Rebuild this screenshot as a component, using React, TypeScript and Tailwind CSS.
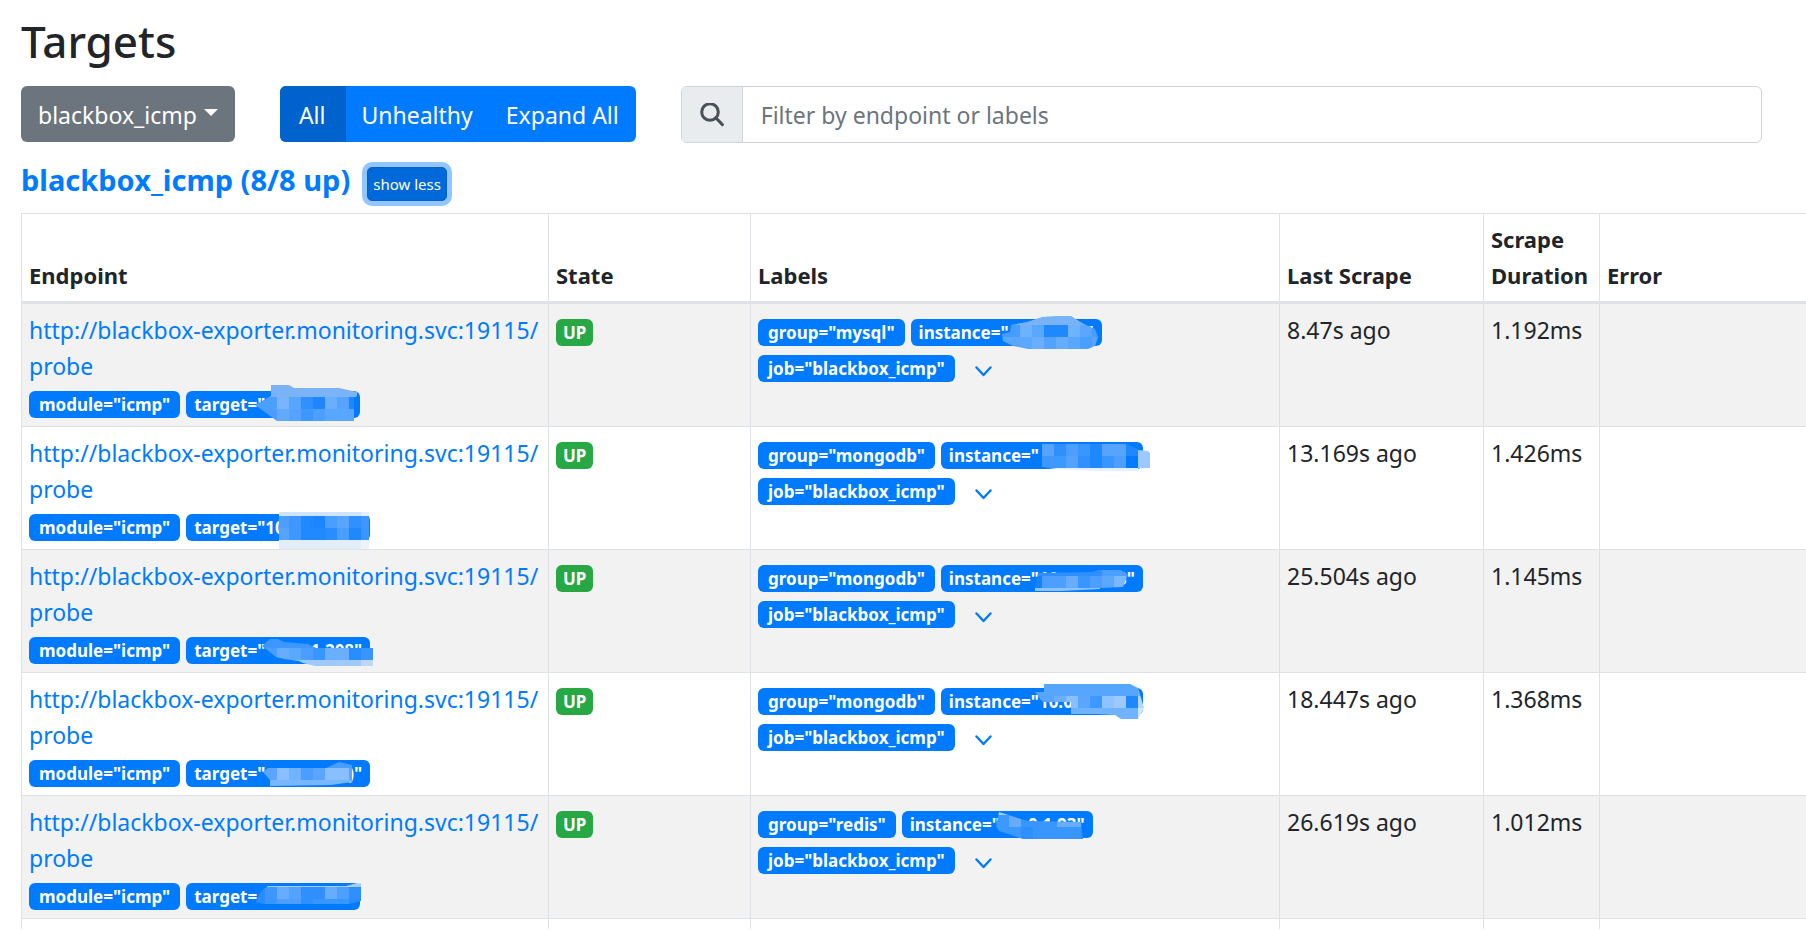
import { useId, useState } from "react";

type Band = { y: number; h: number; x: number; cells: string[] };
type Mask = { outline: string; bands: Band[] };
type Hidden = { head: string; tail?: string; width: string; mask: Mask };
type Target = {
  group: string;
  target: Hidden;
  instance: Hidden;
  last: string;
  duration: string;
};

const CELL = 12;
const fill = (color: string, n: number): string[] => Array(n).fill(color);

const targets: Target[] = [
  {
    group: "mysql",
    last: "8.47s ago",
    duration: "1.192ms",
    target: {
      head: 'target="',
      width: "w-[174px]",
      mask: {
        outline: "85,-6 103,-6 108,-3 153,-3 171,1 171,5 168,7 168,30 91,30 69,14 85,5",
        bands: [
          { y: -6, h: 12, x: 67, cells: fill("#7ab3f7", 9) },
          { y: 6, h: 12, x: 67, cells: ["#4a9fff", "#4a9fff", "#7ab4ff", "#56a5ff", "#3090ff", "#1f86ff", "#6aafff", "#56a4ff", "#1e86ff"] },
          { y: 18, h: 12, x: 67, cells: ["#4c9dff", "#4c9dff", "#62aaff", "#55a3ff", "#3d97ff", "#4c9eff", "#58a6ff", "#58a6ff", "#58a6ff"] },
        ],
      },
    },
    instance: {
      head: 'instance="',
      tail: '"',
      width: "w-[191px]",
      mask: {
        outline: "91,15 99,13 100,6 116,3 131,-2 145,-3 160,-3 171,4 184,10 187,18 184,27 177,30 117,30 102,27 92,22",
        bands: [
          { y: -3, h: 9, x: 85, cells: fill("#78b3f8", 9) },
          { y: 6, h: 12, x: 85, cells: ["#479cff", "#479cff", "#6db1ff", "#58a8ff", "#2088ff", "#2088ff", "#6fb2ff", "#5ba7ff", "#479cff"] },
          { y: 18, h: 12, x: 85, cells: ["#5aa6ff", "#5aa6ff", "#5ca8ff", "#6aafff", "#52a2ff", "#66adff", "#5aa6ff", "#4a9eff", "#5aa6ff"] },
        ],
      },
    },
  },
  {
    group: "mongodb",
    last: "13.169s ago",
    duration: "1.426ms",
    target: {
      head: 'target="10',
      width: "w-[184px]",
      mask: {
        outline: "93,-2 183,-2 183,35 93,35",
        bands: [
          { y: -2, h: 4, x: 91, cells: [...fill("#cfe5fd", 7), "#e4f1ff"] },
          { y: 2, h: 12, x: 91, cells: ["#4c9eff", "#3f98ff", "#2089ff", "#1a85ff", "#4a9eff", "#58a6ff", "#3090ff", "#3d97ff"] },
          { y: 14, h: 12, x: 91, cells: ["#56a4ff", "#3f98ff", "#2089ff", "#2089ff", "#2a8dff", "#4a9eff", "#1f88ff", "#3a96ff"] },
          { y: 26, h: 9, x: 91, cells: [...fill("#e3edf8", 7), "#edf3fa"] },
        ],
      },
    },
    instance: {
      head: 'instance="',
      width: "w-[202px]",
      mask: {
        outline: "101,2 185,2 197,7 197,8 207,9 209,11 209,26 197,26 197,29 157,29 115,27 101,25",
        bands: [
          { y: 2, h: 12, x: 101, cells: ["#56a4ff", "#2f8fff", "#4c9fff", "#3a96ff", "#2088ff", "#56a4ff", "#56a4ff", "#2088ff", "#9cc9ff"] },
          { y: 14, h: 12, x: 101, cells: ["#3d98ff", "#3d98ff", "#52a2ff", "#3090ff", "#1f88ff", "#3a96ff", "#4c9fff", "#047bff", "#9cc9ff"] },
          { y: 26, h: 3, x: 101, cells: fill("#e4f0ff", 9) },
        ],
      },
    },
  },
  {
    group: "mongodb",
    last: "25.504s ago",
    duration: "1.145ms",
    target: {
      head: 'target="',
      tail: '1.208"',
      width: "w-[184px]",
      mask: {
        outline: "76,9 84,2 92,2 98,5 122,7 130,11 187,11 187,29 129,29 117,26 113,24 98,22 90,20",
        bands: [
          { y: 2, h: 9, x: 67, cells: fill("#3d97ff", 10) },
          { y: 11, h: 12, x: 67, cells: ["#4a9eff", "#4a9eff", "#66adff", "#5ba8ff", "#4a9eff", "#3a96ff", "#6aafff", "#6aafff", "#2a8dff", "#3a96ff"] },
          { y: 23, h: 6, x: 67, cells: [...fill("#9fc9f8", 9), "#bcd8f6"] },
        ],
      },
    },
    instance: {
      head: 'instance="10',
      tail: '3"',
      width: "w-[202px]",
      mask: {
        outline: "97,8 152,7 157,5 180,5 187,10 182,22 159,23 159,24 120,26 94,26 94,23",
        bands: [
          { y: 5, h: 6, x: 89, cells: [...fill("#2f8fff", 6), ...fill("#4c9fff", 3)] },
          { y: 11, h: 12, x: 89, cells: ["#1583ff", "#4c9fff", "#4c9fff", "#66adff", "#3a96ff", "#4c9fff", "#5ca8ff", "#7ab8ff", "#4c9fff"] },
          { y: 23, h: 3, x: 89, cells: fill("#8fc3ff", 9) },
        ],
      },
    },
  },
  {
    group: "mongodb",
    last: "18.447s ago",
    duration: "1.368ms",
    target: {
      head: 'target="',
      tail: ')"',
      width: "w-[184px]",
      mask: {
        outline: "77,12 82,8 140,8 153,2 166,5 166,22 145,25 84,26 84,20",
        bands: [
          { y: 2, h: 6, x: 67, cells: fill("#4a9eff", 9) },
          { y: 8, h: 12, x: 67, cells: ["#5aa6ff", "#5aa6ff", "#8abfff", "#6fb3ff", "#4a9eff", "#5aa6ff", "#8abfff", "#8abfff", "#5aa6ff"] },
          { y: 20, h: 6, x: 67, cells: fill("#78b6ff", 9) },
        ],
      },
    },
    instance: {
      head: 'instance="10.0',
      width: "w-[202px]",
      mask: {
        outline: "94,4 103,4 103,-4 189,-4 197,0 203,20 197,31 180,31 174,27 155,26 130,26 130,14 102,14",
        bands: [
          { y: -4, h: 12, x: 89, cells: [...fill("#56a5ff", 9), "#78b6ff"] },
          { y: 8, h: 12, x: 89, cells: ["#56a4ff", "#56a4ff", "#6aafff", "#8abfff", "#5aa6ff", "#3d98ff", "#8fc3ff", "#9ccaff", "#2088ff", "#b5d7ff"] },
          { y: 20, h: 11, x: 89, cells: [...fill("#6fb3ff", 9), "#cfe4ff"] },
        ],
      },
    },
  },
  {
    group: "redis",
    last: "26.619s ago",
    duration: "1.012ms",
    target: {
      head: 'target=',
      width: "w-[174px]",
      mask: {
        outline: "70,19 75,8 82,3 160,3 167,1 175,0 175,18 163,21 77,21",
        bands: [
          { y: 0, h: 4, x: 67, cells: fill("#a5cdfb", 9) },
          { y: 4, h: 12, x: 67, cells: ["#2a8dff", "#3d97ff", "#66adff", "#52a3ff", "#2f8fff", "#2f8fff", "#66adff", "#4c9fff", "#2f8fff"] },
          { y: 16, h: 6, x: 67, cells: ["#2a8dff", "#3a96ff", "#4c9fff", "#4c9fff", "#2f8fff", "#3a96ff", "#3a96ff", "#3a96ff", "#2a8dff"] },
        ],
      },
    },
    instance: {
      head: 'instance="',
      tail: '0.1.93"',
      width: "w-[191px]",
      mask: {
        outline: "94,15 97,1 119,8 126,10 179,11 181,28 121,28 97,20",
        bands: [
          { y: 0, h: 4, x: 83, cells: fill("#a5cdfb", 9) },
          { y: 4, h: 12, x: 83, cells: ["#3d98ff", "#3d98ff", "#66adff", "#3a96ff", "#3a96ff", "#3a96ff", "#66adff", "#66adff", "#3a96ff"] },
          { y: 16, h: 12, x: 83, cells: ["#3d98ff", "#3d98ff", "#3d98ff", "#2f8fff", "#3a96ff", "#3a96ff", "#3a96ff", "#3a96ff", "#2f8fff"] },
        ],
      },
    },
  },
];

function Mosaic({ mask }: { mask: Mask }) {
  const id = useId();
  return (
    <svg className="pointer-events-none absolute top-0 left-0 h-full w-full overflow-visible" shapeRendering="crispEdges" aria-hidden="true">
      <clipPath id={id}>
        <polygon points={mask.outline} />
      </clipPath>
      <g clipPath={`url(#${id})`}>
        {mask.bands.map((b) =>
          b.cells.map((color, i) => (
            <rect key={`${b.y}-${i}`} x={b.x + i * CELL} y={b.y} width={CELL} height={b.h} fill={color} />
          )),
        )}
      </g>
    </svg>
  );
}

function Badge({ text }: { text: string }) {
  return (
    <span className="h-[27px] rounded-md bg-[#007bff] px-2.5 text-[17px] leading-[27px] font-bold whitespace-nowrap text-white">
      {text}
    </span>
  );
}

function HiddenBadge({ value }: { value: Hidden }) {
  return (
    <span
      className={`relative flex h-[27px] justify-between rounded-md bg-[#007bff] px-2 text-[17px] leading-[27px] font-bold whitespace-nowrap text-white ${value.width}`}
    >
      <span>{value.head}</span>
      {value.tail && <span>{value.tail}</span>}
      <Mosaic mask={value.mask} />
    </span>
  );
}

function Row({ item }: { item: Target }) {
  const td = "border border-[#dee2e6] px-[7px] pt-2 pb-1.5 align-top";
  return (
    <tr className="odd:bg-[#f2f2f2]">
      <td className={td}>
        <a href="#probe" className="text-[#007bff]">
          http://blackbox-exporter.monitoring.svc:19115/
          <wbr />
          probe
        </a>
        <div className="flex h-9 items-end gap-1.5 pb-0.5">
          <Badge text={'module="icmp"'} />
          <HiddenBadge value={item.target} />
        </div>
      </td>
      <td className={td}>
        <div className="flex h-9 items-end pb-0.5">
          <span className="h-[27px] rounded-md bg-[#28a745] px-[7px] text-[17px] leading-[27px] font-bold text-white">UP</span>
        </div>
      </td>
      <td className={td}>
        <div className="flex h-9 items-end gap-1.5 pb-0.5">
          <Badge text={`group="${item.group}"`} />
          <HiddenBadge value={item.instance} />
        </div>
        <div className="flex h-9 items-end pb-0.5">
          <Badge text={'job="blackbox_icmp"'} />
          <button type="button" aria-label="Show more labels" className="ml-5 flex h-[22px] items-center">
            <svg width="17" height="11" viewBox="0 0 17 11" fill="none" stroke="#007bff" strokeWidth="2.4" strokeLinecap="round" strokeLinejoin="round">
              <path d="M1.5 1.5 8.5 9l7-7.5" />
            </svg>
          </button>
        </div>
      </td>
      <td className={td}>{item.last}</td>
      <td className={td}>{item.duration}</td>
      <td className="border border-r-0 border-[#dee2e6]"></td>
    </tr>
  );
}

export default function App() {
  const [filter, setFilter] = useState("");
  const th = "border border-b-[3px] border-[#dee2e6] px-[7px] pt-[7px] pb-2 align-bottom";
  return (
    <main className="overflow-hidden bg-white pl-[21px] font-['Noto_Sans','Open_Sans',sans-serif] text-[23px] leading-9 text-[#212529]">
      <h1 className="pt-3.5 text-[44px] leading-[54px] font-medium">Targets</h1>

      <div className="mt-[18px] mr-11 flex items-start gap-[45px]">
        <button type="button" className="flex h-14 items-center gap-[7px] rounded-md bg-[#6c757d] px-[17px] pt-0.5 text-white">
          blackbox_icmp
          <span className="-mt-1.5 border-x-[7px] border-t-[7px] border-x-transparent border-t-white"></span>
        </button>
        <div className="flex h-14 overflow-hidden rounded-md bg-[#007bff] text-white">
          <button type="button" className="border-r border-[#005cbf] bg-[#0062cc] px-[19px] pt-0.5">All</button>
          <button type="button" className="px-4 pt-0.5">Unhealthy</button>
          <button type="button" className="px-[17px] pt-0.5">Expand All</button>
        </div>
        <div className="flex h-[57px] flex-1 overflow-hidden rounded-md border border-[#ced4da]">
          <label htmlFor="filter" aria-label="Filter" className="flex w-[61px] items-center justify-center border-r border-[#ced4da] bg-[#e9ecef]">
            <svg width="24" height="24" viewBox="0 0 24 24" fill="none" stroke="#495057" strokeWidth="3">
              <circle cx="10" cy="9" r="8.3" />
              <path d="m15.8 14.8 6.6 6.8" strokeLinecap="round" />
            </svg>
          </label>
          <input
            id="filter"
            type="text"
            value={filter}
            onChange={(e) => setFilter(e.target.value)}
            placeholder="Filter by endpoint or labels"
            className="min-w-0 flex-1 px-[18px] outline-none placeholder:text-[#6c757d]"
          />
        </div>
      </div>

      <div className="mt-4 flex h-[54px] items-start gap-[17px]">
        <h3 className="text-[29px] leading-[42px] font-bold">
          <a href="#pool" className="text-[#007bff]">blackbox_icmp (8/8 up)</a>
        </h3>
        <button
          type="button"
          className="mt-2 h-[34px] rounded-[5px] border border-[#0062cc] bg-[#0069d9] px-[5px] text-[15px] leading-8 text-white ring-[5px] ring-[#93c6ff]"
        >
          show less
        </button>
      </div>

      <table className="w-full table-fixed border-collapse">
        <colgroup>
          <col className="w-[527px]" />
          <col className="w-[202px]" />
          <col className="w-[529px]" />
          <col className="w-[204px]" />
          <col className="w-[116px]" />
          <col />
        </colgroup>
        <thead>
          <tr className="text-left text-[22px]">
            <th className={th}>Endpoint</th>
            <th className={th}>State</th>
            <th className={th}>Labels</th>
            <th className={th}>Last Scrape</th>
            <th className={th}>Scrape Duration</th>
            <th className={`${th} border-r-0`}>Error</th>
          </tr>
        </thead>
        <tbody>
          {targets.map((item) => (
            <Row key={item.last} item={item} />
          ))}
          <tr className="h-2.5">
            {["w1", "w2", "w3", "w4", "w5"].map((k) => (
              <td key={k} className="border border-b-0 border-[#dee2e6]"></td>
            ))}
            <td className="border-t border-[#dee2e6]"></td>
          </tr>
        </tbody>
      </table>
    </main>
  );
}
